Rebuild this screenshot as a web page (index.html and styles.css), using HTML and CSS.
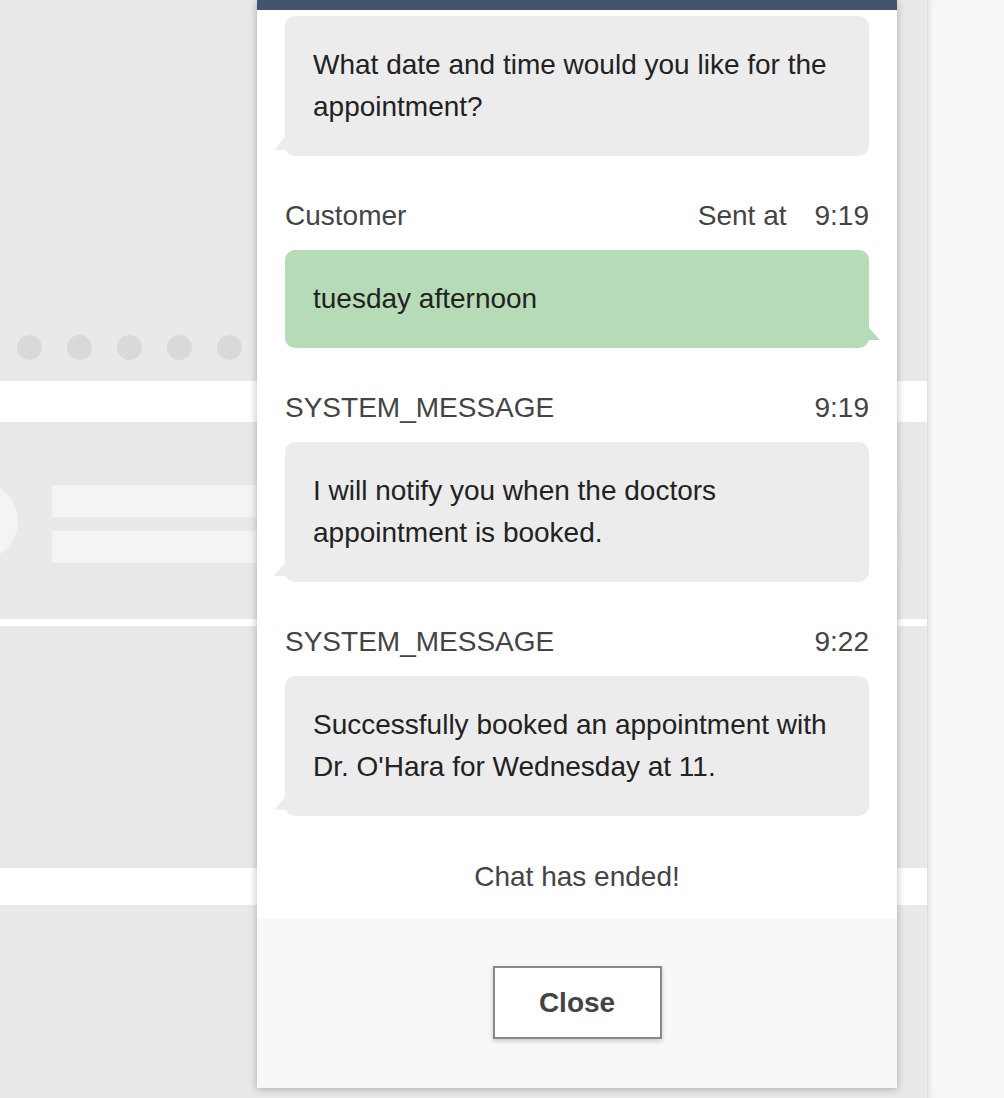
FILE: index.html
```html
<!DOCTYPE html>
<html lang="en">
<head>
<meta charset="utf-8">
<title>Chat</title>
<link rel="stylesheet" href="styles.css">
</head>
<body>
<div class="layout">
  <div class="page">
    <div class="dots">
      <span class="dot"></span><span class="dot"></span><span class="dot"></span><span class="dot"></span><span class="dot"></span>
    </div>
    <div class="band band-wide"></div>
    <div class="card">
      <div class="avatar"></div>
      <div class="bars">
        <div class="bar"></div>
        <div class="bar"></div>
      </div>
    </div>
    <div class="band band-thin"></div>
    <div class="gap-block"></div>
    <div class="band band-mid"></div>
  </div>
  <div class="side"></div>
</div>

<div class="chat">
  <div class="chat-header"></div>
  <div class="chat-body">
    <div class="bubble bubble-in first">What date and time would you like for the appointment?</div>

    <div class="msg">
      <div class="meta"><span>Customer</span><span class="meta-right"><span class="sent">Sent at</span><span>9:19</span></span></div>
      <div class="bubble bubble-out">tuesday afternoon</div>
    </div>

    <div class="msg">
      <div class="meta"><span>SYSTEM_MESSAGE</span><span>9:19</span></div>
      <div class="bubble bubble-in">I will notify you when the doctors appointment is booked.</div>
    </div>

    <div class="msg">
      <div class="meta"><span>SYSTEM_MESSAGE</span><span>9:22</span></div>
      <div class="bubble bubble-in">Successfully booked an appointment with Dr. O'Hara for Wednesday at 11.</div>
    </div>

    <div class="ended">Chat has ended!</div>
  </div>
  <div class="chat-footer">
    <button class="close-btn">Close</button>
  </div>
</div>
</body>
</html>
```

FILE: styles.css
```css
html, body {
  margin: 0;
  padding: 0;
}
body {
  font-family: "Liberation Sans", Arial, sans-serif;
  background: #e9e9e9;
  height: 1098px;
  overflow: hidden;
}
.layout {
  display: flex;
  height: 1098px;
}
.page {
  width: 927px;
  background: #e9e9e9;
  padding-top: 335px;
  box-sizing: border-box;
  overflow: hidden;
}
.side {
  flex: 1;
  background: #f7f7f7;
  border-left: 1px solid #dedede;
  box-shadow: inset 4px 0 5px -2px rgba(0, 0, 0, 0.08);
}
.dots {
  display: flex;
  gap: 25px;
  padding-left: 17px;
  height: 25px;
}
.dot {
  width: 25px;
  height: 25px;
  border-radius: 50%;
  background: #d9d9d9;
}
.band {
  background: #ffffff;
}
.band-wide {
  margin-top: 21px;
  height: 41px;
}
.card {
  height: 197px;
  display: flex;
  align-items: flex-start;
}
.avatar {
  width: 78px;
  height: 78px;
  border-radius: 50%;
  background: #f4f4f4;
  margin-left: -60px;
  margin-top: 60px;
  flex: none;
}
.bars {
  margin-left: 34px;
  margin-top: 63px;
  width: 846px;
  display: flex;
  flex-direction: column;
  gap: 14px;
}
.bar {
  height: 32px;
  background: #f4f4f4;
}
.band-thin {
  height: 7px;
}
.gap-block {
  height: 242px;
}
.band-mid {
  height: 37px;
}

/* chat panel (overlay) */
.chat {
  position: absolute;
  top: 0;
  left: 257px;
  width: 640px;
  height: 1088px;
  background: #ffffff;
  box-shadow: 0 1px 8px rgba(0, 0, 0, 0.28);
  display: flex;
  flex-direction: column;
}
.chat-header {
  height: 10px;
  background: #44546e;
  flex: none;
}
.chat-body {
  flex: 1;
  padding: 0 28px;
}
.bubble {
  position: relative;
  border-radius: 10px;
  padding: 28px;
  font-size: 28px;
  line-height: 42px;
  color: #222222;
}
.bubble.first {
  margin-top: 6px;
}
.bubble-in {
  background: #ececec;
}
.bubble-in::before {
  content: "";
  position: absolute;
  left: -11px;
  bottom: 6px;
  width: 16px;
  height: 13px;
  background: #ececec;
  clip-path: polygon(11px 0, 0 100%, 100% 100%, 100% 0);
}
.bubble-out {
  background: #b5dcb7;
}
.bubble-out::after {
  content: "";
  position: absolute;
  right: -11px;
  bottom: 8px;
  width: 16px;
  height: 12px;
  background: #b5dcb7;
  clip-path: polygon(0 0, 5px 0, 100% 100%, 0 100%);
}
.msg {
  margin-top: 39px;
}
.meta {
  display: flex;
  justify-content: space-between;
  font-size: 28px;
  line-height: 42px;
  color: #444444;
  margin-bottom: 13px;
}
.meta-right {
  display: flex;
  gap: 28px;
}
.ended {
  margin-top: 40px;
  text-align: center;
  font-size: 28px;
  line-height: 42px;
  color: #444444;
}
.chat-footer {
  height: 170px;
  background: #f8f8f8;
  flex: none;
  display: flex;
  justify-content: center;
  align-items: flex-start;
  padding-top: 48px;
  box-sizing: border-box;
}
.close-btn {
  width: 169px;
  height: 73px;
  background: #ffffff;
  border: 2px solid #888888;
  border-radius: 0;
  box-shadow: 0 2px 5px rgba(0, 0, 0, 0.2);
  font-family: "Liberation Sans", Arial, sans-serif;
  font-weight: bold;
  font-size: 28px;
  color: #444444;
  padding: 0;
}
```
